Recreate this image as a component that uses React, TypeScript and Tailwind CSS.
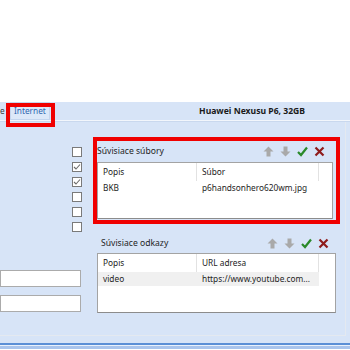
function UpIcon() {
  return (
    <svg width="11" height="11" viewBox="0 0 11 11">
      <path d="M5.5 0.5 L10.5 5.5 L7.5 5.5 L7.5 10.5 L3.5 10.5 L3.5 5.5 L0.5 5.5 Z" fill="#a9a9a9" />
    </svg>
  );
}

function DownIcon() {
  return (
    <svg width="11" height="11" viewBox="0 0 11 11">
      <path d="M5.5 10.5 L10.5 5.5 L7.5 5.5 L7.5 0.5 L3.5 0.5 L3.5 5.5 L0.5 5.5 Z" fill="#a9a9a9" />
    </svg>
  );
}

function Toolbar() {
  return (
    <div className="flex items-center gap-[6px]">
      <UpIcon />
      <DownIcon />
      <svg width="11" height="11" viewBox="0 0 11 11">
        <path d="M1 6 L4 9 L10 1.5" fill="none" stroke="#2a8a2a" strokeWidth="2.2" />
      </svg>
      <svg width="11" height="11" viewBox="0 0 11 11">
        <path d="M1.5 1.5 L9.5 9.5 M9.5 1.5 L1.5 9.5" fill="none" stroke="#8e1b1b" strokeWidth="2.2" />
      </svg>
    </div>
  );
}

function Grid({ col2, rows, shaded }: { col2: string; rows: [string, string][]; shaded?: boolean }) {
  return (
    <div className="h-full bg-white border border-[#a3a3a3] border-b-[#8c8c8c]">
      <div className="flex h-[18px] items-center text-[#222]">
        <div className="w-[99px] pl-[5px] border-r border-[#e2e2e2] h-full flex items-center">Popis</div>
        <div className="w-[122px] pl-[5px] border-r border-[#e2e2e2] h-full flex items-center">{col2}</div>
      </div>
      {rows.map(([a, b]) => (
        <div key={a} className={`flex h-[14px] items-center w-[221px] ${shaded ? 'bg-[#f0f0f0]' : ''}`}>
          <div className="w-[99px] pl-[5px]">{a}</div>
          <div className="w-[122px] pl-[5px] whitespace-nowrap">{b}</div>
        </div>
      ))}
    </div>
  );
}

export default function App() {
  return (
    <div className="relative w-[350px] h-[350px] overflow-hidden bg-white text-[8.3px] text-[#1e1e1e] font-['Noto_Sans','Open_Sans',sans-serif]">
      <div className="h-[102px]" />

      {/* tab strip */}
      <div className="h-[18px] bg-[#d7e4f7] flex items-center">
        <span className="w-[10px] text-[#3b3b3b]">e</span>
        <div className="relative h-[18px] w-[40px] pl-[3px] flex items-center bg-[#dce8f9] border border-[#c4d6ef] text-[#2f66b0]">
          Internet
          <div className="absolute -left-[5px] top-0 w-[49px] h-[24px] border-4 border-[#f00000]" />
        </div>
        <div className="ml-auto mr-[45px] font-bold text-[8.6px] text-[#1a1a1a]">Huawei Nexusu P6, 32GB</div>
      </div>
      <div className="h-[1px] bg-[#f2f6fc]" />
      <div className="h-[1px] bg-[#c9d8ee]" />

      {/* content */}
      <div className="bg-[#d7e4f7]">
        <div className="w-[346px] h-[214px] border-r border-b border-[#e4e9f0] flex">
          <div className="w-[93px] flex flex-col">
            <div className="ml-[72px] mt-[25px] flex flex-col gap-[5px]">
              {[false, true, true, false, false, false].map((c, i) => (
                <div key={i} className="w-[10px] h-[10px] bg-white border border-[#7a7a7a] flex items-center justify-center">
                  {c && (
                    <svg width="8" height="8" viewBox="0 0 8 8">
                      <path d="M1 4 L3 6 L7 1.5" fill="none" stroke="#6b6b6b" strokeWidth="1.1" />
                    </svg>
                  )}
                </div>
              ))}
            </div>
            <div className="mt-[38px] w-[81px] h-[17px] bg-white border border-[#ababab]" />
            <div className="mt-[8px] w-[81px] h-[17px] bg-white border border-[#ababab]" />
          </div>

          <div className="w-[247px] flex flex-col">
            <div className="mt-[15px] border-4 border-[#f00000]">
              <div className="h-[21px] flex items-center justify-between pr-[11px]">
                <span className="text-[8.6px]">Súvisiace súbory</span>
                <Toolbar />
              </div>
              <div className="h-[57px] w-[236px]">
                <Grid col2="Súbor" rows={[['BKB', 'p6handsonhero620wm.jpg']]} />
              </div>
              <div className="h-[1px]" />
            </div>
            <div className="h-[19px] mt-[10px] flex items-center justify-between pl-[8px] pr-[11px]">
              <span className="text-[8.6px]">Súvisiace odkazy</span>
              <Toolbar />
            </div>
            <div className="ml-[4px] h-[60px] w-[239px]">
              <Grid col2="URL adresa" rows={[['video', 'https://www.youtube.com...']]} shaded />
            </div>
          </div>
        </div>
        <div className="h-[7px]" />
      </div>
      <div className="h-[2px] bg-[#5b8fd6]" />
      <div className="h-[1px] bg-[#e8f0fb]" />
      <div className="h-[3px] bg-[#a9c4ec]" />
    </div>
  );
}
